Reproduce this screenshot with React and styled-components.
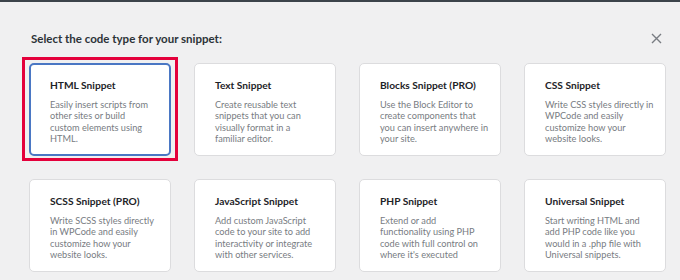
import React from "react";
import styled, { createGlobalStyle } from "styled-components";

const GlobalStyle = createGlobalStyle`
  html, body {
    margin: 0;
    padding: 0;
    background: #f0f0f1;
  }
  body {
    font-family: "Lato", "Noto Sans", sans-serif;
    color: #1d2327;
  }
`;

const TopBar = styled.div`
  height: 2px;
  background: #3c434a;
`;

const Modal = styled.div`
  position: relative;
  height: 278px;
  padding: 24px 16px 0 29px;
  box-sizing: border-box;
`;

const Header = styled.div`
  display: flex;
  justify-content: space-between;
  align-items: center;
  padding-left: 2px;
  height: 24px;
`;

const Title = styled.h2`
  margin: 0;
  font-size: 11.5px;
  font-weight: 700;
  color: #2c3338;
`;

const Close = styled.button`
  border: 0;
  background: none;
  padding: 0;
  width: 16px;
  height: 16px;
  display: flex;
  align-items: center;
  justify-content: center;
  color: #787c82;
  cursor: pointer;
`;

const Grid = styled.div`
  display: grid;
  grid-template-columns: repeat(4, 142px);
  grid-auto-rows: 93px;
  column-gap: 23px;
  row-gap: 23px;
  margin-top: 13px;
`;

const Card = styled.div`
  position: relative;
  background: #fff;
  border: ${(p) => (p.$selected ? "2px solid #4a77c4" : "1px solid #dcdcde")};
  border-radius: 5px;
  padding: ${(p) => (p.$selected ? "11px 10px 0 19px" : "12px 11px 0 20px")};
  box-sizing: border-box;

  ${(p) =>
    p.$highlight &&
    `
    &::after {
      content: "";
      position: absolute;
      left: -9px;
      top: -8px;
      right: -9px;
      bottom: -7px;
      border: 3px solid #e4003b;
      pointer-events: none;
    }
  `}
`;

const CardTitle = styled.h3`
  margin: 0 0 5px;
  font-size: 10.2px;
  font-weight: 700;
  line-height: 18px;
  color: #1d2327;
`;

const CardText = styled.p`
  margin: 0;
  font-size: 9.2px;
  line-height: 11.3px;
  color: #787c82;
`;

const Line = styled.span`
  display: block;
  white-space: nowrap;
`;

const snippets = [
  {
    title: "HTML Snippet",
    lines: ["Easily insert scripts from", "other sites or build", "custom elements using", "HTML."],
    selected: true,
  },
  {
    title: "Text Snippet",
    lines: ["Create reusable text", "snippets that you can", "visually format in a", "familiar editor."],
  },
  {
    title: "Blocks Snippet (PRO)",
    lines: ["Use the Block Editor to", "create components that", "you can insert anywhere in", "your site."],
  },
  {
    title: "CSS Snippet",
    lines: ["Write CSS styles directly in", "WPCode and easily", "customize how your", "website looks."],
  },
  {
    title: "SCSS Snippet (PRO)",
    lines: ["Write SCSS styles directly", "in WPCode and easily", "customize how your", "website looks."],
  },
  {
    title: "JavaScript Snippet",
    lines: ["Add custom JavaScript", "code to your site to add", "interactivity or integrate", "with other services."],
  },
  {
    title: "PHP Snippet",
    lines: ["Extend or add", "functionality using PHP", "code with full control on", "where it's executed"],
  },
  {
    title: "Universal Snippet",
    lines: ["Start writing HTML and", "add PHP code like you", "would in a .php file with", "Universal snippets."],
  },
];

const App = () => (
  <>
    <GlobalStyle />
    <TopBar />
    <Modal>
      <Header>
        <Title>Select the code type for your snippet:</Title>
        <Close aria-label="Close">
          <svg width="11" height="11" viewBox="0 0 11 11">
            <path d="M1 1L10 10M10 1L1 10" stroke="currentColor" strokeWidth="1.4" />
          </svg>
        </Close>
      </Header>
      <Grid>
        {snippets.map((s) => (
          <Card key={s.title} $selected={s.selected} $highlight={s.selected}>
            <CardTitle>{s.title}</CardTitle>
            <CardText>
              {s.lines.map((l) => (
                <Line key={l}>{l}</Line>
              ))}
            </CardText>
          </Card>
        ))}
      </Grid>
    </Modal>
  </>
);

export default App;
